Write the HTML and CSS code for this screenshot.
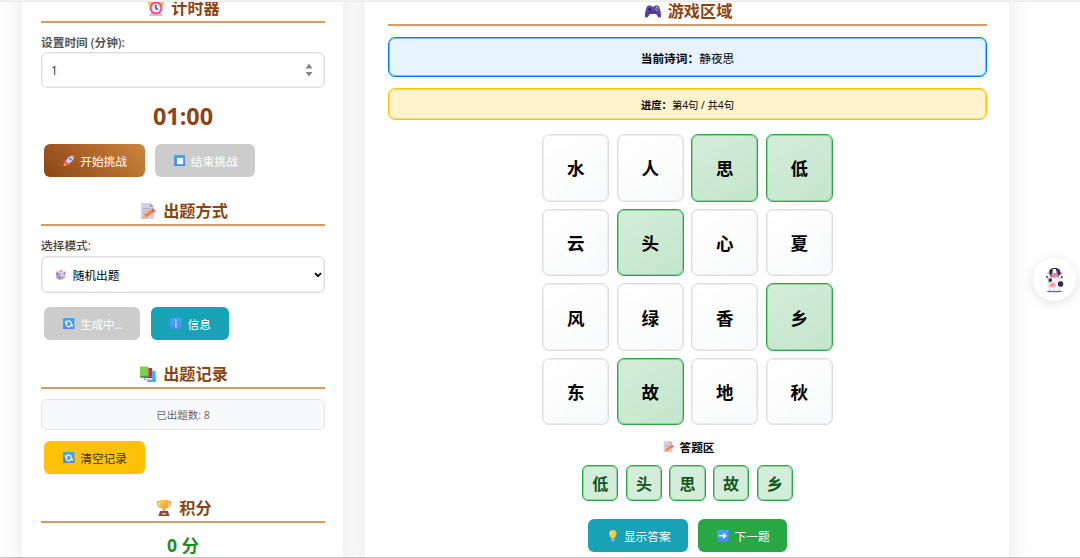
FILE: index.html
```html
<!DOCTYPE html>
<html lang="zh-CN">
<head>
<meta charset="utf-8">
<title>诗词挑战</title>
<link rel="stylesheet" href="styles.css">
</head>
<body>
<svg class="defs" width="0" height="0">
  <defs>
    <linearGradient id="blue" x1="0" y1="0" x2="0" y2="1"><stop offset="0" stop-color="#3fa9f5"/><stop offset="1" stop-color="#4f86ee"/></linearGradient>
    <linearGradient id="gold" x1="0" y1="0" x2="1" y2="1"><stop offset="0" stop-color="#ffd34d"/><stop offset="1" stop-color="#ee8a2c"/></linearGradient>
    <linearGradient id="pad" x1="0" y1="0" x2="0" y2="1"><stop offset="0" stop-color="#54589c"/><stop offset="1" stop-color="#67309f"/></linearGradient>
  </defs>
  <symbol id="i-note" viewBox="0 0 16 16">
    <path d="M1 0h9l4 4v12H1z" fill="#d8d0e2"/><path d="M10 0v4h4z" fill="#aaa0b8"/>
    <path d="M3 5.500h7M3 8h6M3 10.500h3" stroke="#aaa0b8" stroke-width=".9"/>
    <path d="M3 15.500l1.200-3.600L11 6.500l2.700 2.800-6.700 5z" fill="#ff7f3c"/><path d="M11 6.500l1.700-1.200 2.700 2.900-1.700 1.200z" fill="#f4475f"/><path d="M3 15.500l1.200-3.600 2.400 2.500z" fill="#f9b28c"/>
  </symbol>
  <symbol id="i-cycle" viewBox="0 0 16 16">
    <rect width="16" height="16" rx="1.500" fill="url(#blue)"/>
    <path d="M4.500 8.500a3.600 3.600 0 0 0 6.500 2M11.500 7.500a3.600 3.600 0 0 0-6.500-2" fill="none" stroke="#fff" stroke-width="1.700"/>
    <path d="M2.800 3.500v4.300h4.300zM13.200 12.500V8.200H8.900z" fill="#fff"/>
  </symbol>
</svg>
<div class="page">
  <aside class="panel side">
    <h2 class="title title-timer"><svg class="icon" viewBox="0 0 16 16"><path d="M0 5V2l4-2 3 2-4 4zM16 5V2l-4-2-3 2 4 4z" fill="#ffc83d"/><path d="M2.500 13h11l1.500 3H1z" fill="#d3bfe8"/><circle cx="8" cy="8" r="6.500" fill="#f8467c"/><circle cx="8" cy="8" r="4.500" fill="#eee3f5"/><path d="M7.800 4.800V8l1.800 1.800" fill="none" stroke="#43364f" stroke-width="1.300"/></svg>计时器</h2>
    <div class="label label-bold">设置时间 (分钟):</div>
    <div class="field"><span>1</span><svg class="spinner" viewBox="0 0 8 14"><path d="M.5 5.500L4 .5l3.500 5zM.5 9L4 13.500 7.500 9z" fill="#858585"/></svg></div>
    <div class="clock">01:00</div>
    <div class="buttons">
      <div class="btn primary"><svg class="icon" viewBox="0 0 16 16"><path d="M3 7l4-1 4 4-2 5-3-2-3-3-3-1z" fill="#f0436f"/><path d="M4 9c2-5 5-8 11.500-8.500C15.500 6 12 10 7 12z" fill="#d7d3ed"/><path d="M12 .8L15.500.5l-.3 3.800z" fill="#f0436f"/><circle cx="10.200" cy="5.700" r="2" fill="#3ca6ee"/><path d="M0 16l2-6 4 4z" fill="#ff9838"/></svg>开始挑战</div>
      <div class="btn disabled"><svg class="icon" viewBox="0 0 16 16"><rect width="16" height="16" rx="1.500" fill="url(#blue)"/><rect x="4" y="4" width="8.500" height="8.500" rx=".8" fill="#fff"/></svg>结束挑战</div>
    </div>
    <h2 class="title title-next"><svg class="icon"><use href="#i-note"/></svg>出题方式</h2>
    <div class="label label-mode">选择模式:</div>
    <div class="field select"><svg class="icon" viewBox="0 0 16 16"><path d="M8 .5l7 3-1 9-6 3.200-6-3.200-1-9z" fill="#e3dcec"/><path d="M1 3.500l7 3.200v9L2 12.500z" fill="#aaa0c2"/><path d="M8 6.700l7-3.200-1 9-6 3.200z" fill="#cfc7e0"/><circle cx="8" cy="3.500" r="1.300" fill="#ef6581"/><path d="M3 6l1 1M5.500 11l1 1M10 12.500l.5-1.500M12.500 6.500l.4-1.500" stroke="#51427a" stroke-width="1.500"/></svg><span>随机出题</span><svg class="chevron" viewBox="0 0 8 6"><path d="M1 1.200l3 3 3-3" fill="none" stroke="#000" stroke-width="1.700"/></svg></div>
    <div class="buttons buttons-mode">
      <div class="btn disabled loading"><svg class="icon"><use href="#i-cycle"/></svg>生成中...</div>
      <div class="btn info"><svg class="icon" viewBox="0 0 16 16"><rect width="16" height="16" rx="1.500" fill="url(#blue)"/><path d="M8 2.500v2M8 6v7" stroke="#cdeaff" stroke-width="1.900"/></svg>信息</div>
    </div>
    <h2 class="title title-next"><svg class="icon" viewBox="0 0 16 16"><path d="M8 4l7.500 1 .5 11H7z" fill="#3eb5ef"/><path d="M4 2h8v12H4z" fill="#d92559"/><path d="M4 12h8v2H5z" fill="#ddd2e8"/><path d="M0 .5h8.500V10L0 11.500z" fill="#81cf4c"/><path d="M0 10l8.500-.5v2L1 12z" fill="#31a45b"/></svg>出题记录</h2>
    <div class="count">已出题数: 8</div>
    <div class="buttons buttons-record"><div class="btn warning"><svg class="icon"><use href="#i-cycle"/></svg>清空记录</div></div>
    <h2 class="title title-next"><svg class="icon" viewBox="0 0 16 16"><path d="M4 2H1.500C1.500 5.500 3 7 5.500 7.500M12 2h2.500c0 3.500-1.500 5-4 5.500" fill="none" stroke="#eea22e" stroke-width="1.300"/><path d="M3.500 0h9c0 5-1 8-3.300 9v3H6.800V9C4.500 8 3.500 5 3.500 0z" fill="url(#gold)"/><path d="M4 11h8l1.500 5h-11z" fill="#87475f"/><path d="M6 13h4v1.500H6z" fill="#ffc44a"/></svg>积分</h2>
    <div class="score">0 分</div>
  </aside>
  <main class="panel main">
    <h2 class="title title-game"><svg class="icon" viewBox="0 0 16 16"><path d="M3 2.500h3l1 1h2l1-1h3c1.800 1 3 6.500 3 10.500 0 2-2.500 2-3.500 0L11 11H5l-1.500 2C2.500 15 0 15 0 13 0 9 1.200 3.500 3 2.500z" fill="url(#pad)"/><path d="M3 6.300h3.500M4.750 4.500V8" stroke="#29255f" stroke-width="1.300"/><circle cx="12" cy="4.500" r=".8" fill="#f4cd45"/><circle cx="13.300" cy="6" r=".8" fill="#ed526f"/><circle cx="10.800" cy="6" r=".8" fill="#47b9ef"/><circle cx="12" cy="7.500" r=".8" fill="#5bd46e"/><circle cx="6" cy="9" r="1.200" fill="#3e347d"/><circle cx="10" cy="9" r="1.200" fill="#3e347d"/></svg>游戏区域</h2>
    <div class="poem"><b>当前诗词：</b>静夜思</div>
    <div class="progress"><b>进度：</b>第4句 / 共4句</div>
    <div class="grid">
      <div class="tile">水</div><div class="tile">人</div><div class="tile on">思</div><div class="tile on">低</div>
      <div class="tile">云</div><div class="tile on">头</div><div class="tile">心</div><div class="tile">夏</div>
      <div class="tile">风</div><div class="tile">绿</div><div class="tile">香</div><div class="tile on">乡</div>
      <div class="tile">东</div><div class="tile on">故</div><div class="tile">地</div><div class="tile">秋</div>
    </div>
    <h3 class="subtitle"><svg class="icon"><use href="#i-note"/></svg>答题区</h3>
    <div class="answers"><span>低</span><span>头</span><span>思</span><span>故</span><span>乡</span></div>
    <div class="buttons buttons-game">
      <div class="btn info"><svg class="icon" viewBox="0 0 16 16"><path d="M8 0a5 5 0 0 1 5 5.200C13 8 10.700 9 10.300 11.500H5.700C5.300 9 3 8 3 5.200A5 5 0 0 1 8 0z" fill="#ffc83d"/><path d="M6.500 2C5 3 4.700 4.500 5 6" stroke="#fff0a4" fill="none" stroke-width="1.300"/><path d="M5.900 12h4.200v2.500L8.800 16H7.200l-1.300-1.500z" fill="#b7a5c7"/></svg>显示答案</div>
      <div class="btn success"><svg class="icon" viewBox="0 0 16 16"><rect width="16" height="16" rx="1.500" fill="url(#blue)"/><path d="M2.500 7h6V3.800L13.500 8l-5 4.200V9h-6z" fill="#fff"/></svg>下一题</div>
    </div>
  </main>
</div>
<div class="mascot"><svg viewBox="0 0 20 26">
  <ellipse cx="9.500" cy="24.300" rx="8" ry=".9" fill="#5c5a5c"/>
  <path d="M3 11l-1.800-2M16 11l1.500-2" stroke="#51425b" stroke-width="1.400"/>
  <path d="M4 10h10l2 8-2 6H5l-2-6z" fill="#f2eff7" stroke="#c5bccf" stroke-width=".5"/>
  <path d="M13 15l4-1 1.500 3-1.500 3-4-1zM3.500 12l3-1 .5 3-3 1.500z" fill="#302b58"/>
  <circle cx="7.500" cy="18" r="2.600" fill="#ff9e9e"/>
  <path d="M4 5L5 2.500 8 1h4l3 2 .5 4-2.500 3H6z" fill="#302b58"/>
  <path d="M8 2h3l1 6H7z" fill="#fff"/><path d="M3 6l2-1v3zM15 5l2 1-2 2z" fill="#dd3f67"/>
  <ellipse cx="9.800" cy="8.300" rx="3.600" ry="2.300" fill="#ef8396"/><path d="M7 5h1.300M11.500 5h1.300" stroke="#8390c8" stroke-width="1.300"/>
</svg></div>
<div class="edge-top"></div>
<div class="edge-bottom"></div>
</body>
</html>
```

FILE: styles.css
```css
* { box-sizing: border-box; }
html, body { margin: 0; height: 558px; overflow: hidden; }
body {
  background: #fff;
  font-family: "Open Sans", "Noto Sans CJK SC", sans-serif;
  font-size: 11.7px;
  color: #000;
}
.defs { position: absolute; }
.page {
  height: 558px;
  padding: 0 22px;
  display: flex;
  gap: 22px;
}
/* Panels continue above the viewport, so their shadow has no top fade. */
.panel {
  height: 598px;
  margin-top: -40px;
  background: #fff;
  box-shadow: 0 14px 24px rgba(0, 0, 0, .1);
  flex: none;
}
.side { width: 321px; padding: 33px 18px 0 19px; }
.main { width: 644px; padding: 36px 22px 0 23px; }
.icon { width: 11.7px; height: 11.7px; flex: none; }

.title {
  margin: 0;
  display: flex;
  align-items: center;
  justify-content: center;
  gap: 7px;
  height: 30px;
  padding: 1px 0 0 2px;
  border-bottom: 2px solid #d79a61;
  color: #8b4513;
  font-size: 16.2px;
  font-weight: 700;
  line-height: 24px;
}
.title .icon { width: 16px; height: 16px; }
.title-next { margin-top: 19px; }

.label { height: 18px; margin: 10px 0 1px; line-height: 18px; color: #444; font-weight: 500; }
.label-bold { font-weight: 600; color: #555; }
.label-mode { margin-bottom: 2px; }
.field {
  height: 36px;
  display: flex;
  align-items: center;
  justify-content: space-between;
  padding: 0 11px 0 9px;
  border: 1px solid #ddd;
  box-shadow: inset 0 0 0 1px #eee;
  border-radius: 6px;
  color: #333;
}
.spinner { width: 8px; height: 14px; }
.select { height: 37px; padding: 0 2px 0 13px; color: #000; justify-content: flex-start; gap: 6px; }
.chevron { width: 8px; height: 6px; margin-left: auto; }
.clock {
  height: 34px;
  margin: 11px 0;
  text-align: center;
  font-size: 23.4px;
  line-height: 34px;
  font-weight: 700;
  color: #8b4513;
}

.buttons { display: flex; gap: 10px; padding-left: 3px; }
.buttons-mode { margin-top: 14px; gap: 11px; }
.buttons-record { margin-top: 11px; }
.buttons-game { justify-content: center; padding: 0; margin-top: 18px; }
.btn {
  height: 33px;
  display: flex;
  align-items: center;
  gap: 5.5px;
  padding: 0 17.7px 0 19px;
  border-radius: 6px;
  color: #fff;
  white-space: nowrap;
}
.primary { background: linear-gradient(45deg, #8b4513, #cd853f); }
.disabled { background: #ccc; }
.loading { letter-spacing: -.3px; }
.info { background: #17a2b8; }
.success { background: #28a745; }
.warning { background: #ffc107; color: #333; }
.count {
  height: 31px;
  margin-top: 10px;
  border: 1px solid #e3e6e9;
  border-radius: 6px;
  background: #f8f9fb;
  color: #666;
  font-size: 10.5px;
  line-height: 30px;
  text-align: center;
}
.score { margin-top: 10px; color: #228b22; font-size: 17.5px; font-weight: 700; line-height: 24px; text-align: center; }

.poem, .progress { display: flex; align-items: center; justify-content: center; border-radius: 7px; }
.poem { height: 40px; margin-top: 11px; background: #e7f3ff; border: 1px solid #007bff; box-shadow: inset 0 0 0 1px #7dbbff; }
.progress { height: 32px; margin-top: 11px; background: #fff3cd; border: 1px solid #ffc107; box-shadow: inset 0 0 0 1px #ffdb70; font-size: 10.3px; }
.grid {
  width: 291px;
  margin: 14.3px auto 0;
  display: grid;
  grid-template-columns: repeat(4, 1fr);
  grid-auto-rows: 67.3px;
  gap: 7.3px;
}
.tile {
  display: flex;
  align-items: center;
  justify-content: center;
  border: 1px solid #ddd;
  box-shadow: inset 0 0 0 1px #eee;
  border-radius: 7px;
  background: linear-gradient(145deg, #fff, #f8f9fa);
  font-size: 17.5px;
  font-weight: 700;
}
.on { border-color: #28a745; box-shadow: inset 0 0 0 1px #91d0a0; background: linear-gradient(145deg, #d4edda, #c3e6cb); }
.subtitle { display: flex; align-items: center; justify-content: center; gap: 5px; height: 18px; margin: 12.5px 0 0; padding-left: 3px; font-size: 11.7px; }
.subtitle .icon { width: 11px; height: 11px; }
.answers { display: flex; justify-content: center; gap: 7.3px; margin-top: 9px; }
.answers span {
  width: 36.3px;
  height: 36.5px;
  display: flex;
  align-items: center;
  justify-content: center;
  border: 1px solid #28a745;
  box-shadow: inset 0 0 0 1px #91d0a0;
  border-radius: 6px;
  background: #d4edda;
  color: #155724;
  font-size: 16px;
  font-weight: 700;
}
.mascot {
  position: absolute;
  left: 1033px;
  top: 258px;
  width: 43px;
  height: 43px;
  display: flex;
  align-items: center;
  justify-content: center;
  border-radius: 50%;
  background: #fff;
  box-shadow: 0 2px 12px rgba(0, 0, 0, .12);
}
.mascot svg { width: 20px; height: 26px; }
.edge-top { position: absolute; top: 0; left: 0; width: 1080px; height: 2px; background: #f4f4f4; border-bottom: 1px solid #e9e9e9; }
.edge-bottom { position: absolute; top: 557px; left: 0; width: 1080px; height: 1px; background: #bcc6c6; }
```
